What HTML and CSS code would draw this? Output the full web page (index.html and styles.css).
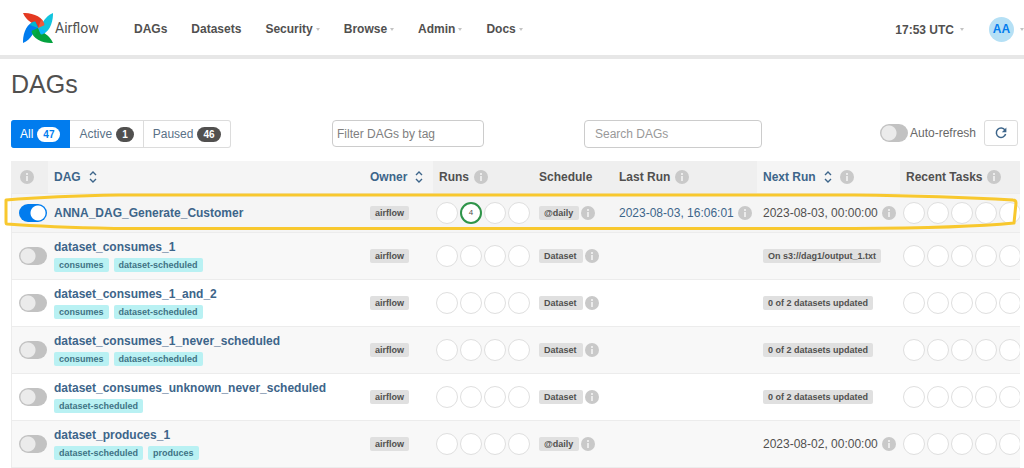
FILE: index.html
```html
<!DOCTYPE html>
<html lang="en">
<head>
<meta charset="utf-8">
<title>DAGs - Airflow</title>
<link rel="stylesheet" href="styles.css">
</head>
<body>
<svg class="defs" aria-hidden="true">
  <symbol id="info" viewBox="0 0 14 14"><circle cx="7" cy="7" r="7" fill="#c9c9c9"/><path d="M6 3h2v2H6zM6 6h2v5H6z" fill="#ebebeb"/></symbol>
  <symbol id="sort" viewBox="0 0 8 12"><path d="M1 4l3-3 3 3M1 8l3 3 3-3" fill="none" stroke="currentColor" stroke-width="1.4"/></symbol>
</svg>
<header class="navbar">
  <a class="brand" href="#">
    <svg class="brand-mark" viewBox="-45 -45 90 90" aria-hidden="true">
      <path fill="#e43921" d="M-45-45C-18-46 18-34 19-8L6-1L0 0C-14-17-34-18-45-45z"/>
      <path fill="#11c4de" d="M45-45C46-18 34 18 8 19L1 6L0 0C17-14 18-34 45-45z"/>
      <path fill="#04a23f" d="M45 45C18 46-18 34-19 8L-6 1L0 0C14 17 34 18 45 45z"/>
      <path fill="#017cee" d="M-45 45C-46 18-34-18-8-19L-1-6L0 0C-17 14-18 34-45 45z"/>
      <path fill="#00b8cf" d="M0 0L-24-9C-21-16-14-20-8-19z"/>
      <path fill="#f0583c" d="M0 0L9-24C16-21 20-14 19-8z"/>
      <path fill="#0cb6ff" d="M0 0L24 9C21 16 14 20 8 19z"/>
      <path fill="#00ad46" d="M0 0L-9 24C-16 21-20 14-19 8z"/>
    </svg>
    <span>Airflow</span>
  </a>
  <nav class="menu">
    <a href="#">DAGs</a>
    <a href="#">Datasets</a>
    <a class="drop" href="#">Security</a>
    <a class="drop" href="#">Browse</a>
    <a class="drop" href="#">Admin</a>
    <a class="drop" href="#">Docs</a>
  </nav>
  <div class="user-menu">
    <a class="drop clock" href="#">17:53 UTC</a>
    <a class="drop account" href="#"><span class="avatar">AA</span></a>
  </div>
</header>
<main>
  <h1>DAGs</h1>
  <div class="controls">
    <div class="status-group">
      <a class="selected" href="#">All <span>47</span></a>
      <a href="#">Active <span>1</span></a>
      <a href="#">Paused <span>46</span></a>
    </div>
    <div><input class="filter" type="text" placeholder="Filter DAGs by tag" aria-label="Filter DAGs by tag"></div>
    <div><input class="search" type="text" placeholder="Search DAGs" aria-label="Search DAGs"></div>
    <div class="refresh">
      <label><input class="toggle" type="checkbox"> Auto-refresh</label>
      <button type="button" aria-label="Refresh"><svg viewBox="0 0 12 12" aria-hidden="true"><path d="M10 3.2A4.7 4.7 0 1 0 10.6 7" fill="none" stroke="currentColor" stroke-width="1.5"/><path d="M11.4.6v4.6H6.8z" fill="currentColor"/></svg></button>
    </div>
  </div>
  <div class="table-wrap">
    <table>
      <colgroup><col class="c-toggle"><col><col class="c-owner"><col class="c-runs"><col class="c-schedule"><col class="c-last"><col class="c-next"><col class="c-tasks"></colgroup>
      <thead>
        <tr>
          <th class="center"><svg class="info"><use href="#info"/></svg></th>
          <th class="sortable"><div class="head"><a href="#">DAG</a><svg class="sort"><use href="#sort"/></svg></div></th>
          <th class="sortable"><div class="head"><a href="#">Owner</a><svg class="sort"><use href="#sort"/></svg></div></th>
          <th><div class="head tight">Runs<svg class="info"><use href="#info"/></svg></div></th>
          <th>Schedule</th>
          <th><div class="head tight">Last Run<svg class="info"><use href="#info"/></svg></div></th>
          <th class="sortable"><div class="head"><a href="#">Next Run</a><svg class="sort"><use href="#sort"/></svg><svg class="info"><use href="#info"/></svg></div></th>
          <th><div class="head tight">Recent Tasks<svg class="info"><use href="#info"/></svg></div></th>
        </tr>
      </thead>
      <tbody>
        <tr class="marked">
          <td class="center"><input class="toggle" type="checkbox" checked aria-label="ANNA_DAG_Generate_Customer"></td>
          <td><a class="dag" href="#">ANNA_DAG_Generate_Customer</a></td>
          <td><a class="label" href="#">airflow</a></td>
          <td class="dots"><div><i></i><i class="success">4</i><i></i><i></i></div></td>
          <td><div class="inline"><a class="label" href="#">@daily</a><svg class="info"><use href="#info"/></svg></div></td>
          <td><div class="inline date"><a href="#">2023-08-03, 16:06:01</a><svg class="info"><use href="#info"/></svg></div></td>
          <td><div class="inline date">2023-08-03, 00:00:00<svg class="info"><use href="#info"/></svg></div></td>
          <td class="dots"><div><i></i><i></i><i></i><i></i><i></i></div></td>
        </tr>
        <tr>
          <td class="center"><input class="toggle" type="checkbox" aria-label="dataset_consumes_1"></td>
          <td><a class="dag" href="#">dataset_consumes_1</a><div class="tags"><a href="#">consumes</a><a href="#">dataset-scheduled</a></div></td>
          <td><a class="label" href="#">airflow</a></td>
          <td class="dots"><div><i></i><i></i><i></i><i></i></div></td>
          <td><div class="inline"><a class="label" href="#">Dataset</a><svg class="info"><use href="#info"/></svg></div></td>
          <td></td>
          <td><span class="label">On s3://dag1/output_1.txt</span></td>
          <td class="dots"><div><i></i><i></i><i></i><i></i><i></i></div></td>
        </tr>
        <tr>
          <td class="center"><input class="toggle" type="checkbox" aria-label="dataset_consumes_1_and_2"></td>
          <td><a class="dag" href="#">dataset_consumes_1_and_2</a><div class="tags"><a href="#">consumes</a><a href="#">dataset-scheduled</a></div></td>
          <td><a class="label" href="#">airflow</a></td>
          <td class="dots"><div><i></i><i></i><i></i><i></i></div></td>
          <td><div class="inline"><a class="label" href="#">Dataset</a><svg class="info"><use href="#info"/></svg></div></td>
          <td></td>
          <td><span class="label">0 of 2 datasets updated</span></td>
          <td class="dots"><div><i></i><i></i><i></i><i></i><i></i></div></td>
        </tr>
        <tr>
          <td class="center"><input class="toggle" type="checkbox" aria-label="dataset_consumes_1_never_scheduled"></td>
          <td><a class="dag" href="#">dataset_consumes_1_never_scheduled</a><div class="tags"><a href="#">consumes</a><a href="#">dataset-scheduled</a></div></td>
          <td><a class="label" href="#">airflow</a></td>
          <td class="dots"><div><i></i><i></i><i></i><i></i></div></td>
          <td><div class="inline"><a class="label" href="#">Dataset</a><svg class="info"><use href="#info"/></svg></div></td>
          <td></td>
          <td><span class="label">0 of 2 datasets updated</span></td>
          <td class="dots"><div><i></i><i></i><i></i><i></i><i></i></div></td>
        </tr>
        <tr>
          <td class="center"><input class="toggle" type="checkbox" aria-label="dataset_consumes_unknown_never_scheduled"></td>
          <td><a class="dag" href="#">dataset_consumes_unknown_never_scheduled</a><div class="tags"><a href="#">dataset-scheduled</a></div></td>
          <td><a class="label" href="#">airflow</a></td>
          <td class="dots"><div><i></i><i></i><i></i><i></i></div></td>
          <td><div class="inline"><a class="label" href="#">Dataset</a><svg class="info"><use href="#info"/></svg></div></td>
          <td></td>
          <td><span class="label">0 of 2 datasets updated</span></td>
          <td class="dots"><div><i></i><i></i><i></i><i></i><i></i></div></td>
        </tr>
        <tr>
          <td class="center"><input class="toggle" type="checkbox" aria-label="dataset_produces_1"></td>
          <td><a class="dag" href="#">dataset_produces_1</a><div class="tags"><a href="#">dataset-scheduled</a><a href="#">produces</a></div></td>
          <td><a class="label" href="#">airflow</a></td>
          <td class="dots"><div><i></i><i></i><i></i><i></i></div></td>
          <td><div class="inline"><a class="label" href="#">@daily</a><svg class="info"><use href="#info"/></svg></div></td>
          <td></td>
          <td><div class="inline date">2023-08-02, 00:00:00<svg class="info"><use href="#info"/></svg></div></td>
          <td class="dots"><div><i></i><i></i><i></i><i></i><i></i></div></td>
        </tr>
      </tbody>
    </table>
    <svg class="highlight" viewBox="0 0 1014 38" preserveAspectRatio="none" aria-hidden="true"><path d="M2 7Q50 3 115 2H850Q940 3 1009 7Q1012 7 1012 10L1010 30Q960 35 850 35.500H110Q45 34 3 31Q2 31 2 29z"/></svg>
  </div>
</main>
</body>
</html>
```
FILE: styles.css
```css
* { box-sizing: border-box; }
body {
  margin: 0;
  font: 12px/16px "Liberation Sans", Arial, sans-serif;
  color: #51504f;
  background: #fff;
}
a { color: #3d658a; text-decoration: none; }
.defs { display: none; }

.navbar {
  display: flex;
  align-items: center;
  height: 59px;
  padding: 0 0 0 23px;
  border-bottom: 4px solid #e7e7e7;
  overflow: hidden;
}
.navbar a { color: #51504f; font-weight: bold; }
.navbar .brand {
  display: flex;
  align-items: center;
  gap: 2px;
  width: 111px;
  font: 14px/20px Roboto, sans-serif;
}
.brand-mark { width: 30px; height: 30px; }
.menu { display: flex; gap: 24px; padding-top: 3px; }
.drop { display: flex; align-items: center; gap: 3px; }
.drop::after {
  content: "";
  border: 2px solid transparent;
  border-top: 3px solid #c4c4c4;
  border-bottom: 0;
}
.user-menu {
  display: flex;
  align-items: center;
  gap: 25px;
  margin-left: auto;
  padding-top: 4px;
}
.user-menu .drop { gap: 6px; }
.navbar .avatar {
  width: 25px;
  height: 25px;
  border-radius: 50%;
  background: #b5e0f5;
  color: #017cee;
  line-height: 25px;
  text-align: center;
}

main { padding: 0 4px 0 11px; }
h1 { margin: 10px 0 21px; font-size: 25px; line-height: 30px; font-weight: normal; }

.controls {
  display: grid;
  grid-template-columns: 321fr 252fr 178fr 256fr;
  margin: 0 2px 13px 0;
}
.status-group { display: flex; height: 28px; }
.status-group a {
  display: flex;
  align-items: center;
  gap: 4px;
  padding: 0 9px;
  border: 1px solid #dcdcdc;
  border-left: 0;
  color: #5a7186;
}
.status-group a:last-child { border-radius: 0 3px 3px 0; }
.status-group .selected {
  border-color: #017cee;
  border-radius: 3px 0 0 3px;
  background: #017cee;
  color: #fff;
}
.status-group span {
  padding: 0 6px;
  border-radius: 8px;
  background: #51504f;
  color: #fff;
  font-size: 10px;
  line-height: 15px;
  font-weight: bold;
}
.status-group .selected span { background: #fff; color: #017cee; }
.controls input[type="text"] {
  display: block;
  border: 1px solid #ccc;
  border-radius: 4px;
  font: inherit;
  background: #fff;
}
.controls .filter { width: 152px; height: 27px; padding: 0 4px; }
.controls .search { width: 178px; height: 28px; padding: 0 10px; }
.filter::placeholder { color: #808080; }
.search::placeholder { color: #999; }
.refresh { display: flex; justify-content: flex-end; gap: 8px; height: 26px; }
.refresh label { display: flex; align-items: center; gap: 2px; color: #686868; }
.refresh button {
  width: 34px;
  padding: 0;
  border: 1px solid #dcdcdc;
  border-radius: 3px;
  background: #fff;
  color: #3d658a;
}
.refresh button svg { display: block; width: 12px; height: 12px; margin: auto; }

.toggle {
  appearance: none;
  display: block;
  flex: none;
  width: 28px;
  height: 18px;
  margin: 0;
  border-radius: 9px;
  background: radial-gradient(circle at 9px 9px, #ebebeb 7px, #c2c2c2 8px);
}
.toggle:checked { background: radial-gradient(circle at 19px 9px, #fff 7px, #017cee 8px); }

.table-wrap { position: relative; }
table { width: 100%; table-layout: fixed; border-collapse: separate; border-spacing: 0; }
.c-toggle { width: 37px; }
.c-owner { width: 69px; }
.c-runs { width: 100px; }
.c-schedule { width: 80px; }
.c-last { width: 144px; }
.c-next { width: 143px; }
.c-tasks { width: 120px; }
th {
  height: 32px;
  padding: 0 6px;
  background: #efefef;
  text-align: left;
  vertical-align: middle;
}
th.sortable { background: #f5f5f5; }
.head { display: flex; align-items: center; gap: 8px; }
.head.tight { gap: 5px; }
.info { display: block; flex: none; width: 14px; height: 14px; }
.sort { display: block; flex: none; width: 8px; height: 12px; color: #3d658a; }
td {
  height: 47px;
  padding: 6px 6px 7px;
  border-top: 1px solid #ececec;
  vertical-align: middle;
}
tbody tr:nth-child(even) td { background: #f8f8f8; }
tbody tr:last-child td { border-bottom: 1px solid #ececec; }
tbody .marked td { height: 39px; background: #f5f5f5; }
td:first-child { border-left: 1px solid #ececec; }
th.center, td.center { padding-left: 9px; padding-right: 0; }
td.center { padding-left: 7px; }
.dag { display: block; font-weight: bold; }
.tags { display: flex; gap: 5px; margin-top: 3px; }
.tags a, .label {
  padding: 0 5px;
  border-radius: 2px;
  font-size: 9px;
  line-height: 14px;
  font-weight: bold;
}
.tags a { background: #b9f1f3; color: #3f7385; }
.label { display: inline-block; background: #e0e0e0; color: #51504f; vertical-align: middle; }
.inline { display: flex; align-items: center; gap: 2px; white-space: nowrap; }
.inline .label { padding-right: 6px; }
.date { gap: 4px; }
.dots { padding-left: 3px; padding-right: 0; overflow: hidden; }
.dots div { display: flex; gap: 2px; }
.dots i {
  flex: none;
  width: 22px;
  height: 22px;
  border: 1px solid #dfdfdf;
  border-radius: 50%;
  background: #fff;
  font-size: 8px;
  line-height: 18px;
  font-style: normal;
  text-align: center;
}
.dots .success { border: 2px solid #2e9449; }

.highlight {
  position: absolute;
  top: 32px;
  left: -7px;
  width: calc(100% + 5px);
  height: 38px;
  pointer-events: none;
}
.highlight path { fill: none; stroke: #f8c82e; stroke-width: 3px; stroke-linejoin: round; }
```
